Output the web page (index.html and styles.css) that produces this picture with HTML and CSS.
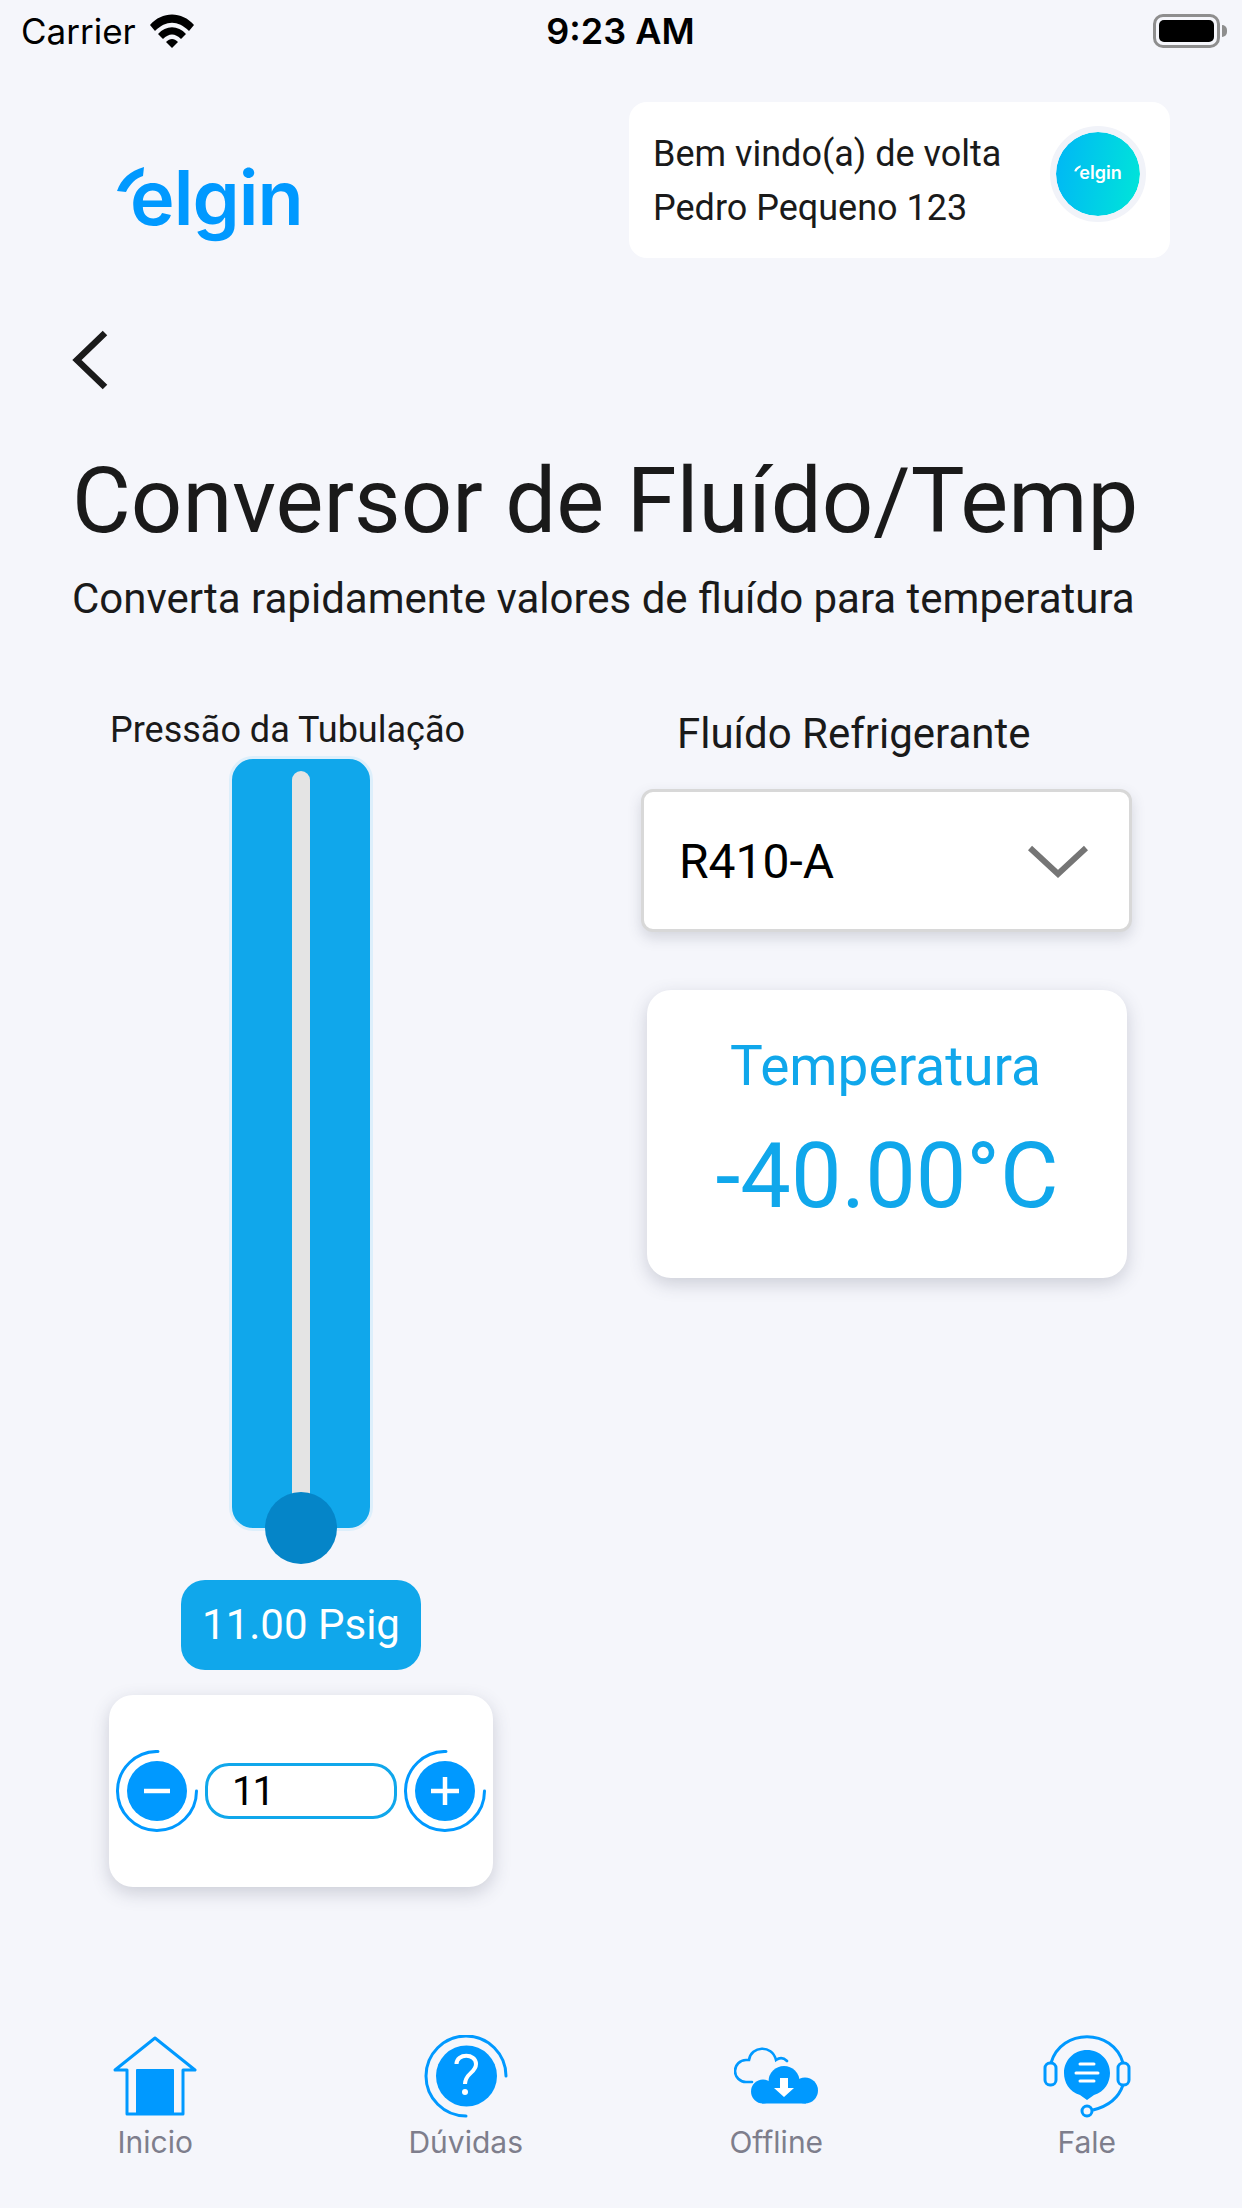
FILE: index.html
```html
<!DOCTYPE html>
<html>

<head>
  <meta charset="utf-8">
  <title>Conversor de Fluído/Temp</title>
  <link rel="stylesheet" href="styles.css">
</head>

<body>
  <main>
    <div class="status">
      <div class="status-left">
        <span>Carrier</span>
        <svg width="46" height="34" viewBox="0 0 46 34">
          <path d="M1 11C13 -3 33 -3 45 11L40 17C29 6 17 6 6 17Z" fill="#000" />
          <path d="M9 20C17 11 29 11 37 20L32 25C26 19 20 19 14 25Z" fill="#000" />
          <path d="M17 28C21 24 25 24 29 28L23 34Z" fill="#000" />
        </svg>
      </div>
      <div class="status-time">9:23 AM</div>
      <div class="battery"><div class="battery-fill"></div></div>
    </div>

    <header class="top">
      <div class="logo">
        <svg class="logo-tick" width="29" height="28" viewBox="0 0 29 28">
          <path d="M1 25C5 13 14 5 28 1L27 10C20 12 14 18 10 26Z" fill="#0099ff" />
        </svg>
        <span>elgin</span>
      </div>
      <div class="welcome">
        <div class="welcome-text">
          <div>Bem vindo(a) de volta</div>
          <div>Pedro Pequeno 123</div>
        </div>
        <div class="avatar">
          <svg class="avatar-tick" width="7" height="7" viewBox="0 0 29 28">
            <path d="M1 25C5 13 14 5 28 1L27 10C20 12 14 18 10 26Z" fill="#fff" />
          </svg>
          <span>elgin</span>
        </div>
      </div>
    </header>

    <div class="back">
      <svg width="38" height="60" viewBox="0 0 38 60">
        <path d="M35 3L7 30L35 57" fill="none" stroke="#1a1a1a" stroke-width="6.500" />
      </svg>
    </div>

    <h1>Conversor de Fluído/Temp</h1>
    <p class="subtitle">Converta rapidamente valores de fluído para temperatura</p>

    <section class="columns">
      <div class="col-left">
        <label class="pressure-label">Pressão da Tubulação</label>
        <div class="slider">
          <div class="slider-line"></div>
          <div class="slider-thumb"></div>
        </div>
        <div class="pill">11.00 Psig</div>
        <div class="stepper">
          <svg width="82" height="82" viewBox="0 0 82 82">
            <path d="M42 1.500A39.500 39.500 0 1 0 80.500 41" fill="none" stroke="#0099ff" stroke-width="3" stroke-linecap="round" />
            <circle cx="41" cy="41" r="30" fill="#0099ff" />
            <path d="M28 41H54" stroke="#fff" stroke-width="4.500" />
          </svg>
          <div class="stepper-input">11</div>
          <svg width="82" height="82" viewBox="0 0 82 82">
            <path d="M42 1.500A39.500 39.500 0 1 0 80.500 41" fill="none" stroke="#0099ff" stroke-width="3" stroke-linecap="round" />
            <circle cx="41" cy="41" r="30" fill="#0099ff" />
            <path d="M27 41H55M41 27V55" stroke="#fff" stroke-width="4.500" />
          </svg>
        </div>
      </div>

      <div class="col-right">
        <label class="fluid-label">Fluído Refrigerante</label>
        <div class="select">
          <span>R410-A</span>
          <svg width="60" height="36" viewBox="0 0 60 36">
            <path d="M2 4L30 30L58 4" fill="none" stroke="#757575" stroke-width="6" />
          </svg>
        </div>
        <div class="temp-card">
          <div class="temp-title">Temperatura</div>
          <div class="temp-value">-40.00°C</div>
        </div>
      </div>
    </section>

    <nav class="tabs">
      <div class="tab">
        <svg width="84" height="84" viewBox="0 0 84 84">
          <path d="M2 35L42 3L82 35H70V79H14V35Z" fill="none" stroke="#0099ff" stroke-width="3" stroke-linejoin="round" />
          <rect x="23" y="34" width="38" height="45" rx="1" fill="#0099ff" />
        </svg>
        <span>Inicio</span>
      </div>
      <div class="tab">
        <svg width="84" height="84" viewBox="0 0 84 84">
          <path d="M82 41A40 40 0 1 0 42 81" fill="none" stroke="#0099ff" stroke-width="3" stroke-linecap="round" />
          <circle cx="42.500" cy="41" r="30.500" fill="#0099ff" />
          <path d="M32.500 29C32.500 18 52 18 52 29C52 38 41 38 41 49" fill="none" stroke="#fff" stroke-width="4" />
          <circle cx="41" cy="57" r="3" fill="#fff" />
        </svg>
        <span>Dúvidas</span>
      </div>
      <div class="tab">
        <svg width="84" height="84" viewBox="0 0 84 84">
          <path d="M18 47H12A11 11 0 0 1 12 25L15 25C17 11 38 9 42 25C46 22 50 23 53 26" fill="none" stroke="#0099ff" stroke-width="2.600" stroke-linecap="round" />
          <circle cx="29" cy="56.500" r="12" fill="#0099ff" />
          <circle cx="50" cy="46.500" r="15.500" fill="#0099ff" />
          <circle cx="71" cy="55.500" r="13" fill="#0099ff" />
          <rect x="28" y="50" width="44" height="18.500" fill="#0099ff" />
          <path d="M46 43H54V53H60L50 62L40 53H46Z" fill="#fff" />
        </svg>
        <span>Offline</span>
      </div>
      <div class="tab">
        <svg width="88" height="84" viewBox="0 0 88 84">
          <path d="M8 28C18 -7 70 -7 80 28M80 50C76 62 66 71 50 75" fill="none" stroke="#0099ff" stroke-width="3" />
          <rect x="2" y="28" width="11" height="22" rx="5" fill="none" stroke="#0099ff" stroke-width="3" />
          <rect x="75" y="28" width="11" height="22" rx="5" fill="none" stroke="#0099ff" stroke-width="3" />
          <circle cx="44" cy="76" r="5" fill="none" stroke="#0099ff" stroke-width="3" />
          <path d="M44 65L37 60C26 57 21 47 21 38C21 25 31 15 44 15C57 15 67 25 67 38C67 47 62 57 51 60Z" fill="#0099ff" />
          <path d="M37 29H51M33 38H55M37 46H51" stroke="#fff" stroke-width="3" stroke-linecap="round" />
        </svg>
        <span>Fale</span>
      </div>
    </nav>
  </main>
</body>

</html>
```

FILE: styles.css
```css
* {
  box-sizing: border-box;
}

html,
body {
  margin: 0;
  padding: 0;
}

body {
  background: #f5f6fb;
  color: #1a1a1a;
  font-family: Roboto, sans-serif;
}

main {
  display: flex;
  flex-direction: column;
  width: 1242px;
  height: 2208px;
}

/* status bar */

.status {
  display: grid;
  grid-template-columns: 1fr auto 1fr;
  align-items: center;
  height: 62px;
  padding: 0 22px 0 21px;
  color: #000;
  font-family: Inter, sans-serif;
  font-size: 35px;
}

.status-left {
  display: flex;
  align-items: center;
  gap: 13px;
}

.status-left svg {
  margin-top: -1px;
}

.status-time {
  font-size: 36px;
  font-weight: 600;
}

.battery {
  position: relative;
  justify-self: end;
  width: 67px;
  height: 34px;
  padding: 3px;
  border: 3px solid #8e8e8e;
  border-radius: 10px;
}

.battery::after {
  content: "";
  position: absolute;
  top: 8px;
  right: -10px;
  width: 5px;
  height: 12px;
  background: #8e8e8e;
  border-radius: 0 5px 5px 0;
}

.battery-fill {
  height: 100%;
  background: #000;
  border-radius: 5px;
}

/* header */

.top {
  display: flex;
  justify-content: space-between;
  align-items: flex-start;
  height: 196px;
  margin-top: 40px;
  padding: 0 72px 0 116px;
}

.logo {
  display: flex;
  align-items: flex-start;
  margin-top: 50px;
  color: #0099ff;
  font-family: Inter, sans-serif;
  font-size: 75.500px;
  font-weight: 600;
  letter-spacing: -1px;
  line-height: 92px;
}

.logo-tick {
  margin-top: 14px;
  margin-right: -15px;
}

.welcome {
  display: flex;
  justify-content: space-between;
  align-items: flex-start;
  width: 541px;
  height: 156px;
  padding: 24px 24px 0 24px;
  background: #fff;
  border-radius: 18px;
}

.welcome-text {
  margin-top: 1px;
  font-size: 36px;
  line-height: 54px;
}

.avatar {
  display: flex;
  justify-content: center;
  align-items: center;
  width: 96px;
  height: 96px;
  padding-bottom: 3px;
  color: #fff;
  font-family: Inter, sans-serif;
  font-size: 18px;
  font-weight: 600;
  background: linear-gradient(100deg, #00b6f6, #00e6d8);
  background-clip: padding-box;
  border: 6px solid #f1f3f9;
  border-radius: 50%;
}

.avatar-tick {
  margin: -8px -2px 0 0;
}

.back {
  height: 60px;
  margin-top: 32px;
  padding-left: 70px;
}

h1 {
  margin: 61px 0 0 72px;
  font-size: 90.400px;
  font-weight: 400;
  line-height: 100px;
}

.subtitle {
  margin: 24px 0 0 72px;
  font-size: 42px;
  line-height: 48px;
}

/* columns */

.columns {
  display: flex;
  margin-top: 85px;
}

.col-left {
  display: flex;
  flex-direction: column;
  align-items: center;
  width: 384px;
  margin-left: 109px;
}

.pressure-label {
  align-self: flex-start;
  margin-left: 1px;
  font-size: 36px;
  line-height: 44px;
  white-space: nowrap;
}

.slider {
  position: relative;
  display: flex;
  justify-content: center;
  width: 144px;
  height: 775px;
  margin-top: 4px;
  padding-top: 12px;
  background: #10a7eb;
  border: 3px solid #ddeffb;
  border-radius: 24px;
}

.slider-line {
  width: 18px;
  height: 100%;
  background: #e4e4e4;
  border-radius: 9px 9px 0 0;
}

.slider-thumb {
  position: absolute;
  bottom: -36px;
  left: 33px;
  width: 72px;
  height: 72px;
  background: #0585c8;
  border-radius: 50%;
}

.pill {
  width: 240px;
  height: 90px;
  margin-top: 49px;
  color: #fff;
  font-size: 42px;
  line-height: 90px;
  text-align: center;
  background: #10a7eb;
  border-radius: 24px;
}

.stepper {
  display: flex;
  justify-content: space-between;
  align-items: center;
  width: 384px;
  height: 192px;
  margin-top: 25px;
  padding: 0 7px;
  background: #fff;
  border-radius: 24px;
  box-shadow: 0 6px 18px rgba(60, 65, 90, 0.22);
}

.stepper-input {
  width: 192px;
  height: 56px;
  padding-left: 24px;
  color: #000;
  font-size: 40px;
  letter-spacing: -2px;
  line-height: 52px;
  border: 3px solid #10a7eb;
  border-radius: 24px;
}

.col-right {
  display: flex;
  flex-direction: column;
  margin-left: 148px;
}

.fluid-label {
  margin-top: 1px;
  margin-left: 36px;
  font-size: 42px;
  line-height: 50px;
}

.select {
  display: flex;
  justify-content: space-between;
  align-items: center;
  width: 491px;
  height: 143px;
  margin-top: 30px;
  padding: 2px 41px 0 35px;
  color: #000;
  font-size: 48px;
  background: #fff;
  border: 3px solid #d8d8d8;
  border-radius: 12px;
  box-shadow: 0 6px 14px rgba(60, 65, 90, 0.18);
}

.temp-card {
  width: 480px;
  height: 288px;
  margin: 58px 0 0 6px;
  padding-top: 44px;
  color: #10a7eb;
  text-align: center;
  background: #fff;
  border-radius: 24px;
  box-shadow: 0 6px 18px rgba(60, 65, 90, 0.22);
}

.temp-title {
  margin-right: 3px;
  font-size: 55px;
  line-height: 64px;
}

.temp-value {
  margin-top: 29px;
  font-size: 90px;
  line-height: 100px;
}

/* bottom tabs */

.tabs {
  display: grid;
  grid-template-columns: repeat(4, 1fr);
  margin-top: auto;
  margin-bottom: 48px;
}

.tab {
  display: flex;
  flex-direction: column;
  align-items: center;
  gap: 5px;
  color: #7e7e8c;
  font-family: Inter, sans-serif;
  font-size: 30px;
  line-height: 36px;
}
```
